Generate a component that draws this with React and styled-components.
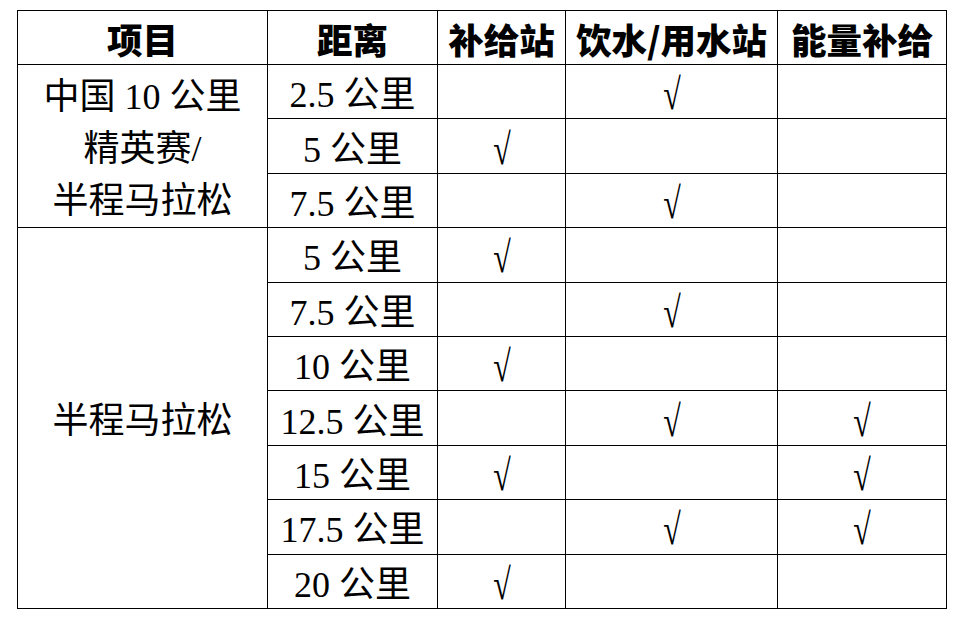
import React from "react"
import styled, { createGlobalStyle } from "styled-components"

const GlobalStyle = createGlobalStyle`
  html, body {
    margin: 0;
    padding: 0;
    background: #ffffff;
  }
`

const Page = styled.div`
  width: 962px;
  height: 619px;
  padding: 10px 0 0 17px;
  box-sizing: border-box;
  background: #fff;
`

const Table = styled.table`
  border-collapse: collapse;
  table-layout: fixed;
  width: 929px;
  font-family: "Liberation Serif", "Noto Sans CJK SC", serif;
  font-size: 36px;
  color: #000;
`

const Row = styled.tr`
  height: ${(p) => (p.$head ? 54 : 54.4)}px;
`

const Head = styled.th`
  border: 1.4px solid #000;
  padding: 2px 0 0;
  font-family: "Noto Sans CJK SC", sans-serif;
  font-weight: 900;
  font-size: 35.5px;
  line-height: 1;
  text-align: center;
  vertical-align: middle;
  white-space: nowrap;
`

const Cell = styled.td`
  border: 1.4px solid #000;
  padding: ${(p) => (p.$group ? "6px 0 0" : "7px 0 0")};
  text-align: center;
  vertical-align: middle;
  line-height: ${(p) => (p.$group ? "52px" : "1")};
  white-space: nowrap;
`

const Check = styled.span`
  display: inline-block;
  font-family: "Liberation Serif", serif;
  font-size: 40px;
  line-height: 1;
  transform: scale(0.8, 1.1);
`

const cols = [250, 170, 128, 212, 169]

const rows = [
  { d: "2.5 公里", a: false, b: true, c: false },
  { d: "5 公里", a: true, b: false, c: false },
  { d: "7.5 公里", a: false, b: true, c: false },
  { d: "5 公里", a: true, b: false, c: false },
  { d: "7.5 公里", a: false, b: true, c: false },
  { d: "10 公里", a: true, b: false, c: false },
  { d: "12.5 公里", a: false, b: true, c: true },
  { d: "15 公里", a: true, b: false, c: true },
  { d: "17.5 公里", a: false, b: true, c: true },
  { d: "20 公里", a: true, b: false, c: false },
]

const mark = (on) => (on ? <Check>√</Check> : null)

export default function App() {
  return (
    <Page>
      <GlobalStyle />
      <Table>
        <colgroup>
          {cols.map((w, i) => (
            <col key={i} style={{ width: w }} />
          ))}
        </colgroup>
        <thead>
          <Row $head>
            <Head>项目</Head>
            <Head>距离</Head>
            <Head>补给站</Head>
            <Head>饮水/用水站</Head>
            <Head>能量补给</Head>
          </Row>
        </thead>
        <tbody>
          {rows.map((r, i) => (
            <Row key={i}>
              {i === 0 && (
                <Cell rowSpan={3} $group>
                  中国 10 公里
                  <br />
                  精英赛/
                  <br />
                  半程马拉松
                </Cell>
              )}
              {i === 3 && (
                <Cell rowSpan={7} $group>
                  半程马拉松
                </Cell>
              )}
              <Cell>{r.d}</Cell>
              <Cell>{mark(r.a)}</Cell>
              <Cell>{mark(r.b)}</Cell>
              <Cell>{mark(r.c)}</Cell>
            </Row>
          ))}
        </tbody>
      </Table>
    </Page>
  )
}
